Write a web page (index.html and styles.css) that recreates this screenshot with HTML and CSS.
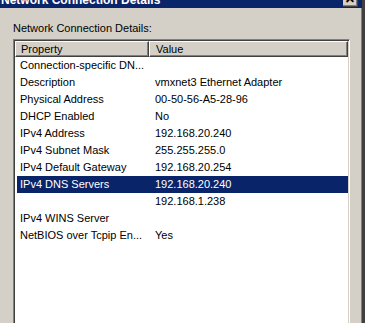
FILE: index.html
```html
<!DOCTYPE html>
<html>
<head>
<meta charset="utf-8">
<link rel="stylesheet" href="styles.css">
</head>
<body>
<div class="window">
  <div class="titlebar">
    <span class="title">Network Connection Details</span>
    <div class="close"><span>×</span></div>
  </div>
  <div class="content">
    <div class="label">Network Connection Details:</div>
    <div class="list">
      <div class="header">
        <div class="hcell c1">Property</div>
        <div class="hcell c2">Value</div>
      </div>
      <div class="rows">
        <div class="row"><div class="p">Connection-specific DN...</div><div class="v"></div></div>
        <div class="row"><div class="p">Description</div><div class="v">vmxnet3 Ethernet Adapter</div></div>
        <div class="row"><div class="p">Physical Address</div><div class="v">00-50-56-A5-28-96</div></div>
        <div class="row"><div class="p">DHCP Enabled</div><div class="v">No</div></div>
        <div class="row"><div class="p">IPv4 Address</div><div class="v">192.168.20.240</div></div>
        <div class="row"><div class="p">IPv4 Subnet Mask</div><div class="v">255.255.255.0</div></div>
        <div class="row"><div class="p">IPv4 Default Gateway</div><div class="v">192.168.20.254</div></div>
        <div class="row sel"><div class="p">IPv4 DNS Servers</div><div class="v">192.168.20.240</div></div>
        <div class="row"><div class="p"></div><div class="v">192.168.1.238</div></div>
        <div class="row"><div class="p">IPv4 WINS Server</div><div class="v"></div></div>
        <div class="row"><div class="p">NetBIOS over Tcpip En...</div><div class="v">Yes</div></div>
      </div>
    </div>
  </div>
</div>
</body>
</html>
```
FILE: styles.css
```css
html, body {
  margin: 0;
  padding: 0;
  background: #ffffff;
  width: 373px;
  height: 323px;
  overflow: hidden;
}
body {
  font-family: "Liberation Sans", Arial, sans-serif;
  font-size: 11px;
  color: #000;
}
.window {
  width: 362px;
  height: 323px;
  background: #d4d0c8;
  border-right: 3px solid #404040;
  box-shadow: inset -1px 0 0 #808080;
  display: flex;
  flex-direction: column;
  overflow: hidden;
}
.titlebar {
  flex-shrink: 0;
  height: 8px;
  background: #0a246a;
  display: flex;
  overflow: hidden;
  position: relative;
}
.title {
  color: #fff;
  font-weight: bold;
  font-size: 12px;
  line-height: 14px;
  margin-top: -7px;
  padding-left: 1px;
  white-space: nowrap;
}
.close {
  position: absolute;
  left: 343px;
  top: -8px;
  width: 14px;
  height: 14px;
  background: #d4d0c8;
  border-right: 1px solid #404040;
  border-bottom: 1px solid #404040;
  box-shadow: inset -1px -1px 0 #808080;
  display: flex;
  justify-content: center;
  align-items: center;
}
.close span {
  font-weight: bold;
  font-size: 16px;
  line-height: 14px;
}
.content {
  flex: 1;
  min-height: 0;
  padding: 13px 0 0 13px;
  display: flex;
  flex-direction: column;
}
.label {
  flex-shrink: 0;
  line-height: 14px;
  height: 18px;
}
.list {
  flex-shrink: 0;
  width: 333px;
  height: 300px;
  background: #fff;
  border-top: 1px solid #808080;
  border-left: 1px solid #808080;
  border-right: 1px solid #ffffff;
  border-bottom: 1px solid #ffffff;
  box-shadow: inset 1px 1px 0 #404040, inset -1px -1px 0 #d4d0c8;
  padding: 1px;
}
.header {
  display: flex;
  height: 16px;
}
.hcell {
  box-sizing: border-box;
  height: 16px;
  background: #d4d0c8;
  border-top: 1px solid #fff;
  border-left: 1px solid #fff;
  border-right: 1px solid #404040;
  border-bottom: 1px solid #404040;
  box-shadow: inset -1px -1px 0 #808080;
  padding-left: 5px;
  line-height: 14px;
}
.c1 { width: 134px; flex-shrink: 0; }
.c2 { flex: 1; padding-left: 6px; }
.rows {
  display: flex;
  flex-direction: column;
}
.row {
  display: flex;
  flex-shrink: 0;
  height: 17px;
  line-height: 17px;
  margin-left: 2px;
  white-space: nowrap;
}
.row.sel {
  background: #0a246a;
  color: #fff;
}
.p {
  width: 134px;
  padding-left: 3px;
  box-sizing: border-box;
}
.v {
  padding-left: 4px;
}
```
